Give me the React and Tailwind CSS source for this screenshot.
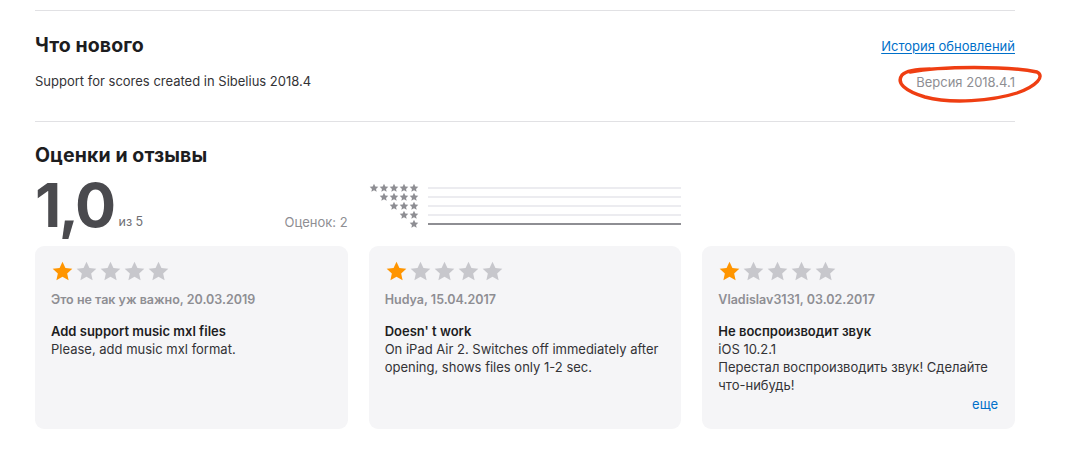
import React from "react";

const StarSmall = ({ className }) => (
  <svg viewBox="0 0 24 24" className={className} fill="currentColor">
    <path d="M12 1.8l3.05 6.6 7.2.8-5.38 4.9 1.5 7.1L12 17.6l-6.37 3.6 1.5-7.1L1.75 9.2l7.2-.8z" />
  </svg>
);

const Stars = ({ filled }) => (
  <div className="flex items-center gap-[1px]">
    {[0, 1, 2, 3, 4].map((i) => (
      <StarSmall
        key={i}
        className={i < filled ? "w-[23px] h-[23px] text-[#ff9500]" : "w-[23px] h-[23px] text-[#c7c7cc]"}
      />
    ))}
  </div>
);

const reviews = [
  {
    name: "Это не так уж важно, 20.03.2019",
    title: "Add support music mxl files",
    body: ["Please, add music mxl format."],
  },
  {
    name: "Hudya, 15.04.2017",
    title: "Doesn' t work",
    body: ["On iPad Air 2. Switches off immediately after opening, shows files only 1-2 sec."],
  },
  {
    name: "Vladislav3131, 03.02.2017",
    title: "Не воспроизводит звук",
    body: ["iOS 10.2.1", "Перестал воспроизводить звук! Сделайте что-нибудь!"],
    more: true,
  },
];

export default function App() {
  return (
    <div
      className="w-[1066px] h-[456px] bg-white overflow-hidden text-[#1d1d1f]"
      style={{ fontFamily: "Inter, 'Noto Sans', sans-serif" }}
    >
      <div className="ml-[35px] w-[980px] pt-[10px]">
        <div className="h-px bg-[#e1e1e4]" />
        <div className="flex items-end justify-between mt-[22px]">
          <h2 className="text-[19.5px] font-bold leading-[24px] tracking-[0.1px]">Что нового</h2>
          <a className="text-[13px] leading-[16px] text-[#0070c9] underline underline-offset-2 mb-[3px]">
            История обновлений
          </a>
        </div>
        <div className="flex items-center justify-between mt-[12px]">
          <p className="text-[13px] leading-[18px] text-[#333336]">Support for scores created in Sibelius 2018.4</p>
          <div className="relative">
            <span className="text-[13px] leading-[18px] text-[#8e8e93]">Версия 2018.4.1</span>
            <svg
              className="absolute left-[-20px] top-[-5px] w-[150px] h-[42px] overflow-visible pointer-events-none"
              viewBox="0 0 150 42"
              fill="none"
            >
              <path
                d="M 14 8 C 45 2, 112 2, 141 8 C 149 12, 141 22, 121 29 C 96 37, 55 40, 29 33 C 9 27, 0 19, 6 11 C 10 7, 22 5, 34 5"
                stroke="#ef3e12"
                strokeWidth="3.4"
                strokeLinecap="round"
                strokeLinejoin="round"
              />
            </svg>
          </div>
        </div>
        <div className="h-px bg-[#e1e1e4] mt-[28px]" />

        <h2 className="text-[19.5px] font-bold leading-[24px] mt-[21px] tracking-[0.1px]">Оценки и отзывы</h2>

        <div className="grid grid-cols-3 gap-x-[21px] mt-[5px]">
          <div className="flex items-end justify-between h-[58px]">
            <div className="flex items-end">
              <span className="text-[61px] font-bold leading-[50px] tracking-[-2.5px] text-[#4a4a4e] h-[50px]">1,0</span>
              <span className="text-[12.5px] text-[#6e6e73] ml-[5px] leading-[14px] mb-[1px]">из 5</span>
            </div>
            <span className="text-[13px] text-[#8e8e93] leading-[14px] mb-[1px]">Оценок: 2</span>
          </div>
          <div className="flex flex-col pt-[11px]">
            {[5, 4, 3, 2, 1].map((n) => (
              <div key={n} className="flex items-center h-[9px]">
                <div className="w-[50px] flex justify-end">
                  {Array.from({ length: n }).map((_, i) => (
                    <StarSmall key={i} className="w-[10px] h-[10px] text-[#8e8e93]" />
                  ))}
                </div>
                <div className="flex-1 ml-[9px] h-[2px] bg-[#ececf0] relative">
                  {n === 1 && <div className="absolute inset-0 bg-[#8e8e93]" />}
                </div>
              </div>
            ))}
          </div>
          <div />
        </div>

        <div className="grid grid-cols-3 gap-x-[21px] mt-[16px]">
          {reviews.map((r, idx) => (
            <div key={idx} className="bg-[#f5f5f7] rounded-[9px] h-[183px] pl-[16px] pr-[16px] pt-[14px] flex flex-col">
              <Stars filled={1} />
              <div className="text-[12.5px] font-semibold text-[#8e8e93] mt-[9px] leading-[16px]">{r.name}</div>
              <div className="text-[13px] font-semibold text-[#1d1d1f] mt-[14px] leading-[18px]">{r.title}</div>
              {r.body.map((b, i) => (
                <div key={i} className="text-[13px] text-[#333336] leading-[18px]">
                  {b}
                </div>
              ))}
              {r.more && (
                <div className="text-[13px] text-[#0070c9] text-right mt-[1px] pr-[1px] leading-[18px]">еще</div>
              )}
            </div>
          ))}
        </div>
      </div>
    </div>
  );
}
